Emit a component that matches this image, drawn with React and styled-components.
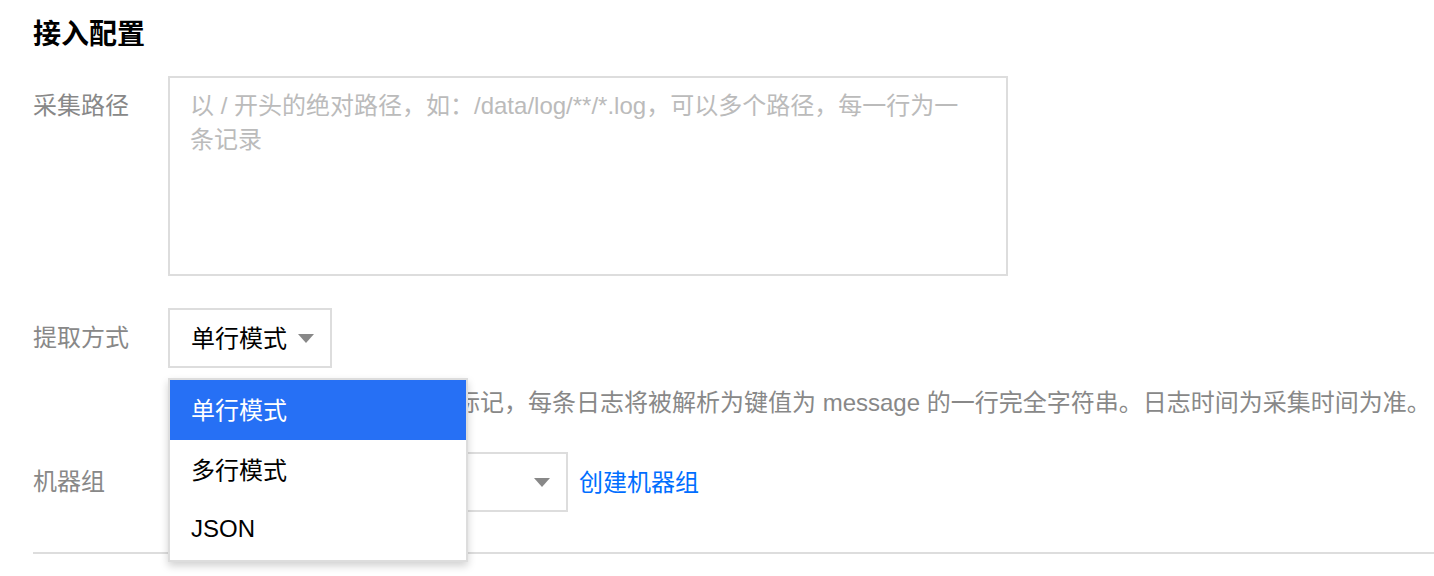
import React from 'react'
import styled, { createGlobalStyle } from 'styled-components'

const GlobalStyle = createGlobalStyle`
  html, body {
    margin: 0;
    padding: 0;
    background: #fff;
  }
  body {
    font-family: "Liberation Sans", "Noto Sans CJK SC", sans-serif;
    color: #000;
  }
`

const Page = styled.div`
  width: 1434px;
  height: 576px;
  padding-left: 33px;
  box-sizing: border-box;
  overflow: hidden;
`

const Title = styled.h2`
  margin: 15px 0 21px;
  font-size: 28px;
  line-height: 40px;
  font-weight: 700;
  color: #000;
`

const Form = styled.div`
  display: flex;
  flex-direction: column;
  gap: 32px;
`

const FieldRow = styled.div`
  display: grid;
  grid-template-columns: 135px 1fr;
  align-items: start;
`

const Label = styled.div`
  font-size: 24px;
  color: #888;
  line-height: ${({ $tall }) => ($tall ? '34px' : '60px')};
  padding-top: ${({ $tall }) => ($tall ? '13px' : '0')};
`

const Control = styled.div`
  display: flex;
  flex-direction: column;
`

const TextArea = styled.textarea`
  width: 840px;
  height: 200px;
  box-sizing: border-box;
  border: 2px solid #ddd;
  padding: 11px 40px 11px 20px;
  font-family: inherit;
  font-size: 24px;
  line-height: 34px;
  resize: none;
  outline: none;
  &::placeholder {
    color: #bbb;
  }
`

const InlineRow = styled.div`
  display: flex;
  align-items: center;
  gap: 11px;
`

const SelectWrap = styled.div`
  position: relative;
  width: ${({ $width }) => $width}px;
`

const SelectBox = styled.div`
  height: 60px;
  box-sizing: border-box;
  border: 2px solid #ddd;
  display: flex;
  align-items: center;
  justify-content: space-between;
  padding: 0 16px 3px 21px;
  font-size: 24px;
  color: #000;
  background: #fff;
`

const Caret = styled.span`
  width: 0;
  height: 0;
  margin-top: 3px;
  border-left: 8px solid transparent;
  border-right: 8px solid transparent;
  border-top: 9px solid #888;
`

const Help = styled.div`
  margin-top: 18px;
  font-size: 24px;
  line-height: 34px;
  color: #888;
  white-space: nowrap;
`

const Menu = styled.ul`
  position: absolute;
  top: 70px;
  left: 0;
  width: 300px;
  margin: 0;
  padding: 0;
  list-style: none;
  box-sizing: border-box;
  border: 2px solid #ddd;
  background: #fff;
  box-shadow: 0 4px 8px rgba(0, 0, 0, 0.18);
  z-index: 10;
`

const MenuItem = styled.li`
  height: 60px;
  box-sizing: border-box;
  display: flex;
  align-items: center;
  padding: 0 0 3px 21px;
  font-size: 24px;
  color: ${({ $active }) => ($active ? '#fff' : '#000')};
  background: ${({ $active }) => ($active ? '#2670f5' : '#fff')};
`

const Link = styled.a`
  font-size: 24px;
  color: #006eff;
  text-decoration: none;
  padding-bottom: 3px;
`

const Divider = styled.hr`
  margin: 40px 0 0;
  border: none;
  border-top: 2px solid #ddd;
`

const modes = ['单行模式', '多行模式', 'JSON']

export default function App() {
  return (
    <Page>
      <GlobalStyle />
      <Title>接入配置</Title>
      <Form>
        <FieldRow>
          <Label $tall>采集路径</Label>
          <TextArea placeholder="以 / 开头的绝对路径，如：/data/log/**/*.log，可以多个路径，每一行为一条记录" />
        </FieldRow>
        <FieldRow>
          <Label>提取方式</Label>
          <Control>
            <SelectWrap $width={164}>
              <SelectBox>
                单行模式
                <Caret />
              </SelectBox>
              <Menu>
                {modes.map((m, i) => (
                  <MenuItem key={m} $active={i === 0}>{m}</MenuItem>
                ))}
              </Menu>
            </SelectWrap>
            <Help>
              以换行符为一条日志的结束标记，每条日志将被解析为键值为 message 的一行完全字符串。日志时间为采集时间为准。
            </Help>
          </Control>
        </FieldRow>
        <FieldRow>
          <Label>机器组</Label>
          <InlineRow>
            <SelectWrap $width={400}>
              <SelectBox>
                <span />
                <Caret />
              </SelectBox>
            </SelectWrap>
            <Link href="#">创建机器组</Link>
          </InlineRow>
        </FieldRow>
      </Form>
      <Divider />
    </Page>
  )
}
